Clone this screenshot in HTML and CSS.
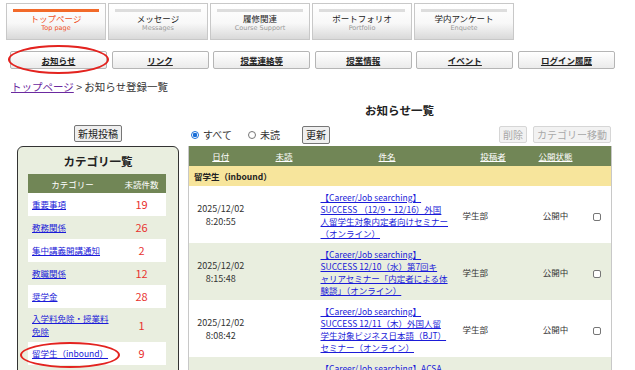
FILE: index.html
```html
<!DOCTYPE html>
<html lang="ja">
<head>
  <meta charset="UTF-8">
  <title>お知らせ一覧</title>
  <link rel="stylesheet" href="styles.css">
</head>
<body>

  <!-- Main tabs -->
  <ul class="tabs">
    <li class="tab active"><span class="tab-bar"></span><span class="tab-jp">トップページ</span><span class="tab-en">Top page</span></li>
    <li class="tab"><span class="tab-bar"></span><span class="tab-jp">メッセージ</span><span class="tab-en">Messages</span></li>
    <li class="tab"><span class="tab-bar"></span><span class="tab-jp">履修関連</span><span class="tab-en">Course Support</span></li>
    <li class="tab"><span class="tab-bar"></span><span class="tab-jp">ポートフォリオ</span><span class="tab-en">Portfolio</span></li>
    <li class="tab"><span class="tab-bar"></span><span class="tab-jp">学内アンケート</span><span class="tab-en">Enquete</span></li>
  </ul>

  <!-- Sub menu -->
  <ul class="submenu">
    <li><a href="#">お知らせ</a></li>
    <li><a href="#">リンク</a></li>
    <li><a href="#">授業連絡等</a></li>
    <li><a href="#">授業情報</a></li>
    <li><a href="#">イベント</a></li>
    <li><a href="#">ログイン履歴</a></li>
  </ul>

  <div class="breadcrumb"><a href="#">トップページ</a> &gt; お知らせ登録一覧</div>

  <div class="main">
    <!-- Left: categories -->
    <div class="side">
      <button class="btn">新規投稿</button>
      <div class="cat-panel">
        <h2>カテゴリ一覧</h2>
        <table class="cat-table">
          <colgroup><col style="width: 89px"><col></colgroup>
          <tr><th>カテゴリー</th><th>未読件数</th></tr>
          <tr><td><a href="#">重要事項</a></td><td class="num">19</td></tr>
          <tr class="alt"><td><a href="#">教務関係</a></td><td class="num">26</td></tr>
          <tr><td><a href="#">集中講義開講通知</a></td><td class="num">2</td></tr>
          <tr class="alt"><td><a href="#">教職関係</a></td><td class="num">12</td></tr>
          <tr><td><a href="#">奨学金</a></td><td class="num">28</td></tr>
          <tr class="alt"><td><a href="#">入学料免除・授業料免除</a></td><td class="num">1</td></tr>
          <tr><td><a href="#">留学生（inbound）</a></td><td class="num">9</td></tr>
        </table>
      </div>
    </div>

    <!-- Right: notice list -->
    <div class="content">
      <h1>お知らせ一覧</h1>
      <div class="toolbar">
        <div class="filters">
          <label><input type="radio" name="filter" checked>すべて</label>
          <label><input type="radio" name="filter">未読</label>
          <button class="btn">更新</button>
        </div>
        <div class="actions">
          <button class="btn" disabled>削除</button>
          <button class="btn" disabled>カテゴリー移動</button>
        </div>
      </div>

      <table class="list">
        <colgroup>
          <col style="width: 64px"><col style="width: 63px"><col style="width: 143px">
          <col style="width: 69px"><col style="width: 56px"><col style="width: 28px">
        </colgroup>
        <tr>
          <th><a href="#">日付</a></th>
          <th><a href="#">未読</a></th>
          <th><a href="#">件名</a></th>
          <th><a href="#">投稿者</a></th>
          <th><a href="#">公開状態</a></th>
          <th></th>
        </tr>
        <tr class="group"><td colspan="6">留学生（inbound）</td></tr>
        <tr>
          <td class="date">2025/12/02<br>8:20:55</td>
          <td></td>
          <td class="subject"><a href="#">【Career/Job searching】<br>SUCCESS （12/9・12/16）外国<br>人留学生対象内定者向けセミナー<br>（オンライン）</a></td>
          <td>学生部</td>
          <td class="state">公開中</td>
          <td class="check"><input type="checkbox"></td>
        </tr>
        <tr class="alt">
          <td class="date">2025/12/02<br>8:15:48</td>
          <td></td>
          <td class="subject"><a href="#">【Career/Job searching】<br>SUCCESS 12/10（水）第7回キ<br>ャリアセミナー「内定者による体<br>験談」（オンライン）</a></td>
          <td>学生部</td>
          <td class="state">公開中</td>
          <td class="check"><input type="checkbox"></td>
        </tr>
        <tr>
          <td class="date">2025/12/02<br>8:08:42</td>
          <td></td>
          <td class="subject"><a href="#">【Career/Job searching】<br>SUCCESS 12/11（木）外国人留<br>学生対象ビジネス日本語（BJT）<br>セミナー（オンライン）</a></td>
          <td>学生部</td>
          <td class="state">公開中</td>
          <td class="check"><input type="checkbox"></td>
        </tr>
        <tr class="alt">
          <td class="date">2025/12/01<br>17:30:12</td>
          <td></td>
          <td class="subject"><a href="#">【Career/Job searching】ACSA<br>外国人留学生向け合同企業説明<br>会のご案内（オンライン）<br>参加者募集</a></td>
          <td>学生部</td>
          <td class="state">公開中</td>
          <td class="check"><input type="checkbox"></td>
        </tr>
      </table>
    </div>
  </div>

  <!-- red annotation marks -->
  <div class="mark mark-notice"></div>
  <div class="mark mark-inbound"></div>

</body>
</html>
```

FILE: styles.css
```css
* {
  box-sizing: border-box;
}

body {
  margin: 0;
  position: relative;
  overflow: hidden;
  font-family: "Noto Sans CJK JP", "Noto Sans", sans-serif;
  font-size: 8.5px;
  color: #333;
  background: #fff;
}

a {
  color: #1b1bd8;
}

/* main tabs */
.tabs {
  display: flex;
  gap: 2px;
  list-style: none;
  margin: 3px 0 0;
  padding: 0 0 0 6px;
}

.tab {
  width: 100px;
  height: 37px;
  border: 1px solid #c8c8c8;
  background: linear-gradient(#fff 0%, #f8f8f8 55%, #d9d9d9 100%);
  text-align: center;
}

.tab-bar {
  display: block;
  height: 3px;
  margin: 5px 6px 0;
  background: #dddddd;
}

.tab.active .tab-bar {
  background: #f26a2a;
}

.tab-jp {
  display: block;
  margin-top: 1px;
  font-size: 8.5px;
  line-height: 11px;
  color: #222;
}

.tab-en {
  display: block;
  font-family: "DejaVu Sans", sans-serif;
  font-size: 6.5px;
  line-height: 9px;
  color: #999;
}

.tab.active .tab-jp,
.tab.active .tab-en {
  color: #f0501e;
}

/* sub menu */
.submenu {
  display: flex;
  gap: 4.6px;
  list-style: none;
  margin: 11px 0 0;
  padding: 0 0 0 10px;
}

.submenu li {
  width: 97px;
}

.submenu a {
  display: block;
  height: 18px;
  line-height: 16px;
  border: 1px solid #b5b5b5;
  border-radius: 2px;
  background: linear-gradient(#fff, #ebebeb);
  text-align: center;
  color: #222;
  font-weight: bold;
  font-size: 8.5px;
}

.breadcrumb {
  margin: 11px 0 0 11px;
  font-size: 10.5px;
  line-height: 14px;
  color: #333;
}

.breadcrumb a {
  color: #6b2aa0;
}

/* layout */
.main {
  display: flex;
  gap: 9px;
  margin-top: 8px;
  padding-left: 17px;
}

.side {
  width: 162px;
  padding-top: 23px;
  text-align: center;
}

.content {
  width: 423px;
}

.btn {
  font-family: inherit;
  font-size: 10px;
  line-height: 13px;
  height: 17px;
  padding: 0 3px;
  color: #222;
  background: #efefef;
  border: 1px solid #767676;
  border-radius: 2px;
}

.btn:disabled {
  color: #a8a8a8;
  background: #f2f2f2;
  border-color: #d6d6d6;
}

/* category panel */
.cat-panel {
  margin-top: 4px;
  height: 240px;
  padding: 0 10px;
  border: 1px solid #333;
  border-radius: 6px;
  background: #e9eedf;
  text-align: left;
}

.cat-panel h2 {
  margin: 0 0 3px;
  padding-top: 4px;
  font-size: 11.5px;
  line-height: 20px;
  text-align: center;
  color: #222;
}

.cat-table {
  width: 138px;
  border-collapse: collapse;
  table-layout: fixed;
}

.cat-table th {
  height: 19px;
  padding: 0;
  background: #718656;
  color: #fff;
  font-weight: normal;
  text-align: center;
}

.cat-table td {
  padding: 4px 4px;
  line-height: 13px;
  background: #fff;
}

.cat-table tr.alt td {
  background: #e9eedf;
}

.cat-table .num {
  text-align: center;
  color: #e8322e;
  font-size: 11px;
  line-height: 15px;
}

/* notice list */
h1 {
  margin: 0;
  font-size: 11.5px;
  line-height: 16px;
  text-align: center;
  color: #222;
}

.toolbar {
  display: flex;
  justify-content: space-between;
  align-items: center;
  height: 19px;
  margin: 7px 0 2px;
  padding-left: 3px;
}

.filters {
  display: flex;
  align-items: center;
  font-size: 10px;
  line-height: 14px;
}

.filters label {
  display: flex;
  align-items: center;
  margin-right: 16px;
}

.filters label + label {
  margin-right: 22px;
}

.filters input {
  appearance: none;
  width: 8px;
  height: 8px;
  margin: 0 4px 0 0;
  border: 1px solid #767676;
  border-radius: 50%;
  background: #fff;
}

.filters input:checked {
  border-color: #1a6fd8;
  background: radial-gradient(#1a6fd8 0 2px, #fff 2.5px);
}

.filters .btn {
  height: 18px;
}

.actions {
  display: flex;
  gap: 6px;
}

.list {
  width: 423px;
  border-collapse: collapse;
  table-layout: fixed;
  border-left: 1px solid #c8c8c8;
  border-right: 1px solid #c8c8c8;
}

.list th {
  height: 20px;
  padding: 0;
  background: #718656;
  font-weight: normal;
  text-align: center;
}

.list th a {
  color: #fff;
}

.list .group td {
  height: 20px;
  padding: 0 5px;
  background: #f7e59c;
  font-weight: bold;
  color: #222;
  line-height: 12px;
}

.list td {
  padding: 5px 4px 4px;
  line-height: 12px;
  vertical-align: middle;
}

.list tr.alt td {
  background: #e9eedf;
}

.list .date {
  text-align: center;
  font-size: 9px;
  line-height: 13px;
}

.list .subject {
  padding-left: 5px;
  white-space: nowrap;
  overflow: hidden;
}

.list .state {
  text-align: center;
}

.list .check {
  text-align: center;
}

.check input {
  appearance: none;
  width: 8px;
  height: 8px;
  margin: 0;
  border: 1px solid #767676;
  border-radius: 2px;
  background: #fff;
  vertical-align: middle;
}

/* red annotation ellipses */
.mark {
  position: absolute;
  border: 2.5px solid #e3231f;
  border-radius: 50%;
  pointer-events: none;
}

.mark-notice {
  left: 8px;
  top: 45px;
  width: 101px;
  height: 29px;
}

.mark-inbound {
  left: 20px;
  top: 342px;
  width: 100px;
  height: 26px;
}
```
